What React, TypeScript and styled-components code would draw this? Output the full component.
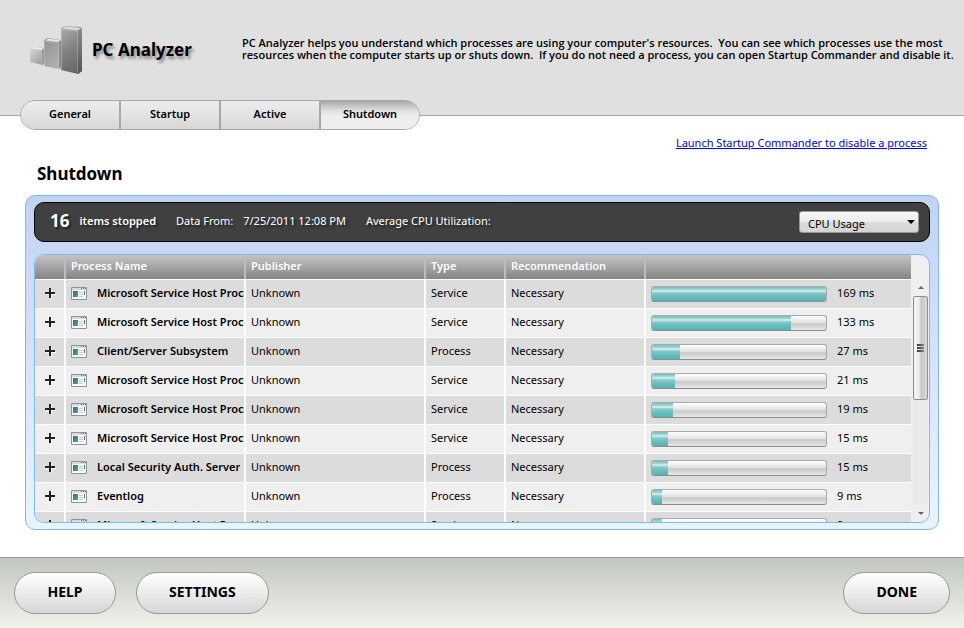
import React, { useState } from 'react';
import styled, { createGlobalStyle, css } from 'styled-components';

const GlobalStyle = createGlobalStyle`
  *, *::before, *::after { box-sizing: border-box; }
  body {
    margin: 0;
    background: #fff;
    color: #000;
    font: 11px/16px "Noto Sans", "Open Sans", sans-serif;
  }
  button, select { font: inherit; color: inherit; }
`;

const Page = styled.div`
  display: flex;
  flex-direction: column;
  height: 100vh;
  overflow: hidden;
`;

const Header = styled.header`
  display: flex;
  align-items: flex-start;
  flex: none;
  height: 116px;
  padding: 24px 4px 0 28px;
  background: #e0e0e0;
  border-bottom: 1px solid #a7a7a7;
`;

const Brand = styled.div`
  display: flex;
  align-items: center;
  flex: none;
  width: 214px;
  gap: 8px;
`;

const BrandName = styled.h1`
  margin: 0;
  font-size: 17px;
  line-height: 24px;
  text-shadow: 2px 3px 3px rgba(0, 0, 0, 0.4);
`;

const Intro = styled.p`
  margin: 13px 0 0;
  font-family: "Open Sans", "Noto Sans", sans-serif;
  font-size: 11px;
  font-weight: 600;
  line-height: 12px;
  white-space: pre-wrap;
`;

const Tabs = styled.nav`
  display: flex;
  flex: none;
  align-self: flex-start;
  margin: -16px 0 0 20px;
  border: 1px solid #a7a7a7;
  border-radius: 15px;
  overflow: hidden;
`;

const Tab = styled.button<{ $active: boolean }>`
  width: 100px;
  height: 28px;
  padding: 0 0 2px;
  border: 0;
  border-right: 2px solid #a7a7a7;
  background: linear-gradient(#ededed, #d8d8d8);
  font-weight: 600;
  &:last-child { width: 98px; border-right: 0; }
  ${(p) => p.$active && css`background: linear-gradient(#a8a8a8, #e0e0e0 35%, #eee 55%);`}
`;

const Main = styled.main`
  display: flex;
  flex: 1;
  flex-direction: column;
  min-height: 0;
  padding: 5px 25px 27px;
`;

const LaunchLink = styled.a`
  align-self: flex-end;
  margin-right: 12px;
  color: #00f;
`;

const Title = styled.h2`
  margin: 11px 0 9px 12px;
  font-size: 17px;
  line-height: 24px;
`;

const Panel = styled.section`
  display: flex;
  flex: 1;
  flex-direction: column;
  gap: 12px;
  min-height: 0;
  padding: 6px 8px;
  border: 1px solid #7bbcf0;
  border-radius: 10px;
  background: linear-gradient(#c2d2f3, #e9f4ff);
`;

const Summary = styled.div`
  display: flex;
  align-items: center;
  flex: none;
  gap: 20px;
  height: 40px;
  padding: 0 10px 2px 15px;
  border: 1px solid #000;
  border-radius: 10px;
  background: #404040;
  color: #fff;
  text-shadow: 2px 2px 2px rgba(0, 0, 0, 0.5);
`;

const SummaryGroup = styled.div`
  display: flex;
  align-items: center;
  gap: 10px;
`;

const Count = styled.strong`
  font-size: 17px;
`;

const CountLabel = styled.span`
  font-weight: 600;
`;

const SortSelect = styled.select`
  width: 120px;
  height: 22px;
  margin-top: 2px;
  padding: 3px 8px 0;
  border: 1px solid #999;
  border-radius: 3px;
  appearance: none;
  color: #000;
  background: linear-gradient(#f7f7f7, #ececec 50%, #dcdcdc 50%, #d4d4d4);
`;

const SelectBox = styled.div`
  display: grid;
  align-items: center;
  margin-left: auto;
  > * { grid-area: 1 / 1; }
  > svg { justify-self: end; margin: 2px 4px 0 0; pointer-events: none; }
`;

const Viewport = styled.div`
  display: flex;
  flex: 1;
  min-height: 0;
  overflow: hidden;
  border: 1px solid #7bbcf0;
  border-radius: 10px;
  background: #efefef;
`;

const TableArea = styled.div`
  flex: 1;
  min-width: 0;
  overflow: hidden;
`;

const Table = styled.table`
  width: 100%;
  table-layout: fixed;
  border-collapse: separate;
  border-spacing: 0;
`;

const HeadCell = styled.th`
  height: 25px;
  padding: 0 5px 2px;
  border-bottom: 1px solid #fff;
  background: linear-gradient(90deg, transparent calc(100% - 2px), #bdbdbd 0), linear-gradient(#c4c4c4, #858585);
  color: #fff;
  font-weight: 600;
  line-height: 16px;
  text-align: left;
  &:last-child { background: linear-gradient(#c4c4c4, #858585); }
`;

const Row = styled.tr`
  background: #efefef;
  &:nth-child(odd) { background: #dcdcdc; }
`;

const Cell = styled.td`
  height: 29px;
  padding: 0 0 2px 5px;
  overflow: hidden;
  border-right: 2px solid #fff;
  border-bottom: 1px solid #fff;
  white-space: nowrap;
  &:last-child { border-right: 0; }
`;

const Expand = styled.button`
  display: flex;
  margin: 0 0 1px 4px;
  padding: 0;
  border: 0;
  background: none;
`;

const Process = styled.div`
  display: flex;
  align-items: center;
  gap: 10px;
  > svg { flex: none; }
`;

const ProcessName = styled.span`
  min-width: 0;
  overflow: hidden;
  font-weight: 600;
`;

const Usage = styled.div`
  display: flex;
  align-items: center;
  gap: 10px;
`;

const Track = styled.div`
  width: 176px;
  height: 16px;
  margin-top: 1px;
  overflow: hidden;
  border: 1px solid #aaa;
  border-bottom-color: #8c8c8c;
  border-radius: 3px;
  background: linear-gradient(#fff, #e0e0e0 50%, #c8c8c8 55%, #e8e8e8);
`;

const Fill = styled.div`
  height: 100%;
  background: linear-gradient(#6fbfc0, #a5d8d8 20%, #dff1f1 28%, #8ccaca 42%, #72c1c1 60%, #51b3b3);
`;

const Scroll = styled.div`
  display: flex;
  flex: none;
  flex-direction: column;
  align-items: center;
  width: 18px;
  padding: 24px 1px 0 2px;
`;

const ScrollButton = styled.button`
  display: flex;
  align-items: center;
  justify-content: center;
  width: 15px;
  height: 17px;
  padding: 0;
  border: 0;
  background: none;
`;

const Rail = styled.div`
  flex: 1;
  width: 100%;
  background: #eaeaea;
`;

const Thumb = styled.div`
  display: flex;
  flex-direction: column;
  align-items: center;
  justify-content: center;
  gap: 1px;
  height: 104px;
  border: 1px solid #8f8f8f;
  border-radius: 2px;
  background: linear-gradient(90deg, #f5f5f5, #ececec 40%, #c6c6c6 55%, #dadada);
`;

const Grip = styled.span`
  width: 7px;
  height: 2px;
  background: linear-gradient(90deg, #333, #888);
`;

const Footer = styled.footer`
  display: flex;
  flex: none;
  gap: 20px;
  height: 71px;
  padding: 14px;
  border-top: 1px solid #999;
  background: linear-gradient(#c1c6be, #f0f3ec);
`;

const Pill = styled.button`
  min-width: 102px;
  height: 42px;
  padding: 0 32px 3px;
  border: 1px solid #999;
  border-radius: 21px;
  background: linear-gradient(#fff, #f0f0f0 40%, #d6d6d6);
  font-size: 14px;
  font-weight: 700;
  &:last-child { margin-left: auto; }
`;

const Logo = () => (
  <svg width="56" height="52" viewBox="0 0 56 52" aria-hidden="true">
    <defs>
      <linearGradient id="front" x1="0" y1="0" x2="0.3" y2="1">
        <stop offset="0" stopColor="#b0b0b0" />
        <stop offset="0.5" stopColor="#868686" />
        <stop offset="1" stopColor="#6a6a6a" />
      </linearGradient>
      <linearGradient id="middle" x1="0" y1="0" x2="0.6" y2="1">
        <stop offset="0" stopColor="#929292" />
        <stop offset="1" stopColor="#b0b0b0" />
      </linearGradient>
      <linearGradient id="small" x1="0" y1="0" x2="0.8" y2="1">
        <stop offset="0" stopColor="#dcdcdc" />
        <stop offset="1" stopColor="#9c9c9c" />
      </linearGradient>
      <linearGradient id="side" x1="0" y1="0" x2="0" y2="1">
        <stop offset="0" stopColor="#8c8c8c" />
        <stop offset="1" stopColor="#545454" />
      </linearGradient>
    </defs>
    <path d="M2 25Q2 23 6 22L15 24 16 25V39L14 41 2 38Z" fill="url(#small)" />
    <path d="M3 24.5 6 22.5 15 24.5 13 26Z" fill="#ececec" />
    <path d="M14 26 16 25V39L14 41Z" fill="#9c9c9c" />
    <path d="M16 17Q16 15 21 14L32 16 33 17V43L31 45 16 42Z" fill="url(#middle)" />
    <path d="M17 16.5 21 14.5 32 16.5 30 18Z" fill="#e6e6e6" />
    <path d="M31 18 33 17V43L31 45Z" fill="#8c8c8c" />
    <path d="M33 5Q33 3 38 2L52 3Q54 3 54 5V47L50 50 33 46Z" fill="url(#front)" />
    <path d="M34 4.5 38 2.5 53 4 50 6.5Z" fill="#dcdcdc" />
    <path d="M50 6.5 54 4V47L50 50Z" fill="url(#side)" />
    <path d="M2.5 37V25.5L13.5 27V40M16.5 41V17.5L30.5 19V44M33.5 45V5.5L49.5 7V48" fill="none" stroke="#d0d0d0" strokeOpacity="0.35" />
  </svg>
);

const PlusIcon = () => (
  <svg width="12" height="12" viewBox="0 0 12 12" aria-hidden="true">
    <path d="M2 7.5H12M7.5 2V12" stroke="#fff" />
    <path d="M1 6H11M6 1V11" stroke="#222" strokeWidth="2" />
  </svg>
);

const WindowIcon = () => (
  <svg width="16" height="13" viewBox="0 0 16 13" aria-hidden="true">
    <defs>
      <linearGradient id="app" x1="0" y1="0" x2="1" y2="1">
        <stop offset="0" stopColor="#3565a0" />
        <stop offset="1" stopColor="#4fae6d" />
      </linearGradient>
    </defs>
    <path d="M.5 .5H15.5V12.5H.5Z" fill="#fafafa" stroke="#8d9399" />
    <path d="M1 1H15V3H1Z" fill="#d3dae1" />
    <path d="M10 1.5H11M12 1.5H13M14 1.5H15" stroke="#777" />
    <path d="M2 4H7V10H2Z" fill="url(#app)" />
    <path d="M8 5.5H12M8 7.5H12M8 9.5H12" stroke="#ccc" />
    <path d="M13 4H14V8H13Z" fill="#3e889b" />
  </svg>
);

const Triangle = ({ up = false, dark = false }: { up?: boolean; dark?: boolean }) => (
  <svg width={dark ? 8 : 6} height={dark ? 4 : 3} viewBox="0 0 8 4" aria-hidden="true">
    <path d={up ? 'M0 4 4 0 8 4Z' : 'M0 0H8L4 4Z'} fill={dark ? '#000' : '#666'} />
  </svg>
);

const columns = ['', 'Process Name', 'Publisher', 'Type', 'Recommendation', ''];
const widths = [31, 180, 180, 80, 140];
const host = 'Microsoft Service Host Process';
const processes = [
  { name: host, type: 'Service', ms: 169, fill: 100 },
  { name: host, type: 'Service', ms: 133, fill: 80 },
  { name: 'Client/Server Subsystem', type: 'Process', ms: 27, fill: 16 },
  { name: host, type: 'Service', ms: 21, fill: 13 },
  { name: host, type: 'Service', ms: 19, fill: 12 },
  { name: host, type: 'Service', ms: 15, fill: 9 },
  { name: 'Local Security Auth. Server', type: 'Process', ms: 15, fill: 9 },
  { name: 'Eventlog', type: 'Process', ms: 9, fill: 6 },
  { name: host, type: 'Service', ms: 9, fill: 6 },
];

export default function App() {
  const [tab, setTab] = useState('Shutdown');
  return (
    <Page>
      <GlobalStyle />
      <Header>
        <Brand>
          <Logo />
          <BrandName>PC Analyzer</BrandName>
        </Brand>
        <Intro>
          {"PC Analyzer helps you understand which processes are using your computer's resources.  You can see which processes use the most resources when the computer starts up or shuts down.  If you do not need a process, you can open Startup Commander and disable it."}
        </Intro>
      </Header>
      <Tabs>
        {['General', 'Startup', 'Active', 'Shutdown'].map((name) => (
          <Tab key={name} $active={name === tab} onClick={() => setTab(name)}>{name}</Tab>
        ))}
      </Tabs>
      <Main>
        <LaunchLink href="#startup-commander">Launch Startup Commander to disable a process</LaunchLink>
        <Title>Shutdown</Title>
        <Panel>
          <Summary>
            <SummaryGroup>
              <Count>16</Count>
              <CountLabel>items stopped</CountLabel>
            </SummaryGroup>
            <SummaryGroup>
              <span>Data From:</span>
              <span>7/25/2011 12:08 PM</span>
            </SummaryGroup>
            <span>Average CPU Utilization:</span>
            <SelectBox>
              <SortSelect aria-label="Measure">
                <option>CPU Usage</option>
              </SortSelect>
              <Triangle dark />
            </SelectBox>
          </Summary>
          <Viewport>
            <TableArea>
              <Table>
                <colgroup>
                  {widths.map((w, i) => <col key={i} width={w} />)}
                  <col />
                </colgroup>
                <thead>
                  <tr>{columns.map((c, i) => <HeadCell key={i}>{c}</HeadCell>)}</tr>
                </thead>
                <tbody>
                  {processes.map((p, i) => (
                    <Row key={i}>
                      <Cell><Expand aria-label={`Expand ${p.name}`}><PlusIcon /></Expand></Cell>
                      <Cell><Process><WindowIcon /><ProcessName>{p.name}</ProcessName></Process></Cell>
                      <Cell>Unknown</Cell>
                      <Cell>{p.type}</Cell>
                      <Cell>Necessary</Cell>
                      <Cell>
                        <Usage>
                          <Track><Fill style={{ width: `${p.fill}%` }} /></Track>
                          {p.ms} ms
                        </Usage>
                      </Cell>
                    </Row>
                  ))}
                </tbody>
              </Table>
            </TableArea>
            <Scroll>
              <ScrollButton aria-label="Scroll up"><Triangle up /></ScrollButton>
              <Rail><Thumb><Grip /><Grip /><Grip /></Thumb></Rail>
              <ScrollButton aria-label="Scroll down"><Triangle /></ScrollButton>
            </Scroll>
          </Viewport>
        </Panel>
      </Main>
      <Footer>
        <Pill>HELP</Pill>
        <Pill>SETTINGS</Pill>
        <Pill>DONE</Pill>
      </Footer>
    </Page>
  );
}
